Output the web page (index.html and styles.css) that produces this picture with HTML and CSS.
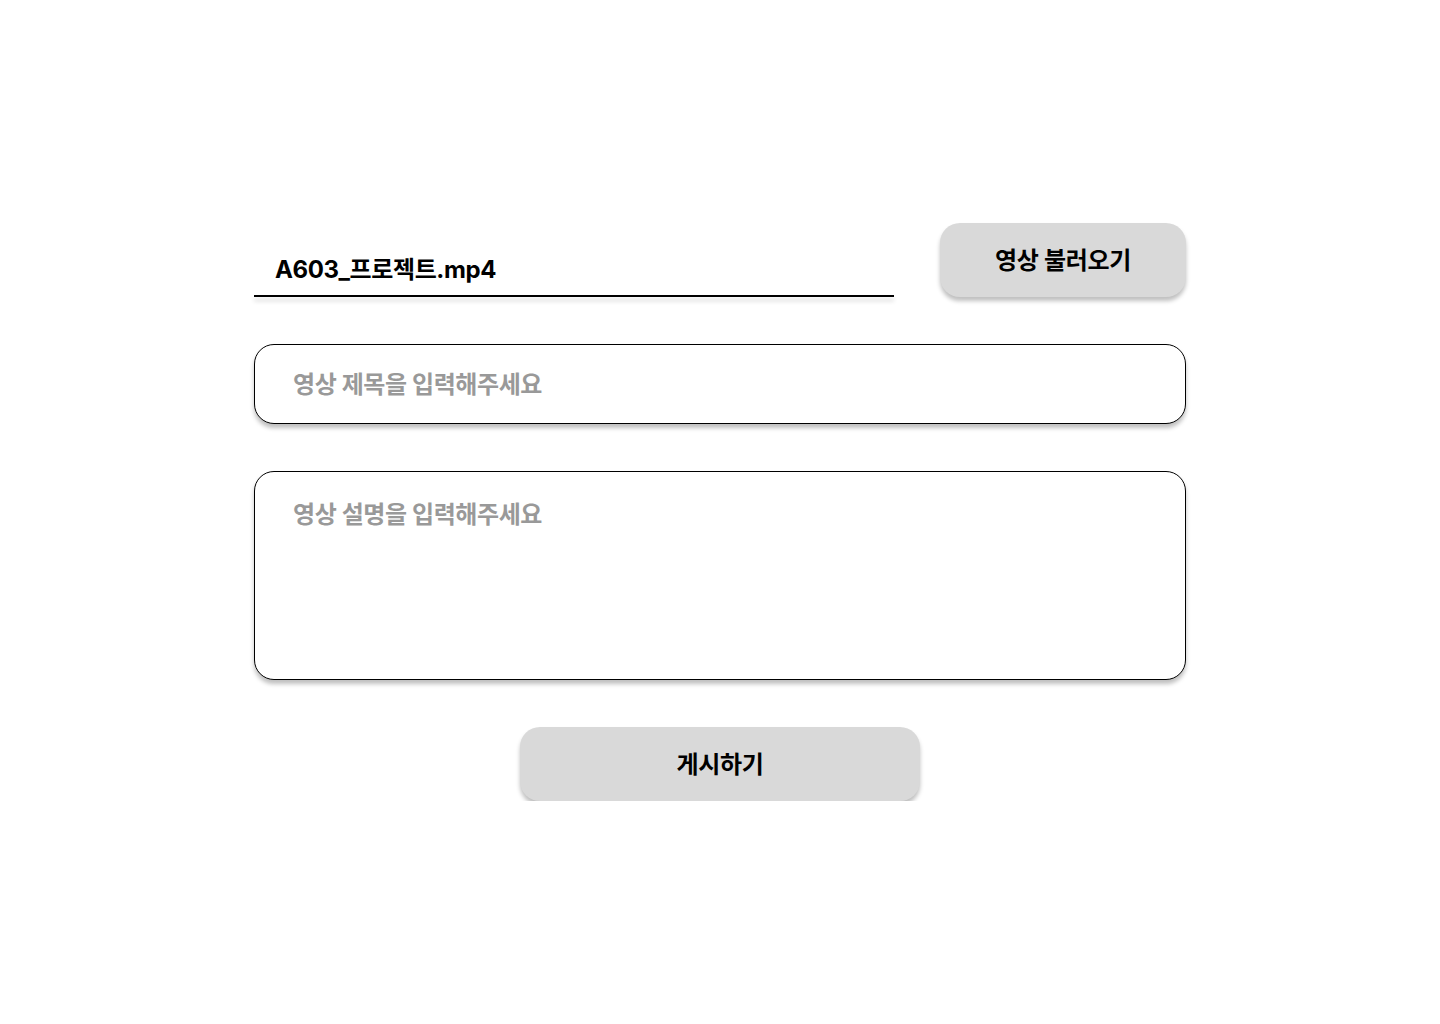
FILE: index.html
```html
<!DOCTYPE html>
<html lang="ko">
<head>
<meta charset="utf-8">
<title>영상 업로드</title>
<link rel="stylesheet" href="styles.css">
</head>
<body>
<main class="form">
  <div class="file-row">
    <div class="file-field">
      <span class="file-name">A603_프로젝트.mp4</span>
      <div class="file-line"></div>
    </div>
    <button class="btn btn-load" type="button"><span class="btn-label">영상 불러오기</span></button>
  </div>
  <div class="box box-title"><span class="placeholder">영상 제목을 입력해주세요</span></div>
  <div class="box box-desc"><span class="placeholder">영상 설명을 입력해주세요</span></div>
  <div class="submit-row">
    <button class="btn btn-post" type="button"><span class="btn-label">게시하기</span></button>
  </div>
</main>
</body>
</html>
```

FILE: styles.css
```css
* { box-sizing: border-box; }
html, body { margin: 0; padding: 0; background: #ffffff; }
body {
  font-family: Inter, "Noto Sans CJK KR", sans-serif;
  color: #000;
}
.form {
  width: 932px;
  margin: 223px auto 0;
  display: flex;
  flex-direction: column;
  gap: 47px;
}
.file-row {
  display: flex;
  align-items: flex-end;
  justify-content: space-between;
}
.file-field {
  width: 640px;
  display: flex;
  flex-direction: column;
}
.file-name {
  font-size: 24px;
  font-weight: 700;
  line-height: 30px;
  letter-spacing: -0.4px;
  padding-left: 21px;
  margin-bottom: 10px;
}
.file-line {
  height: 2px;
  background: #000;
  box-shadow: 0 4px 4px rgba(0,0,0,0.18);
}
.btn {
  border: none;
  background: #d9d9d9;
  border-radius: 20px;
  box-shadow: 0 4px 4px rgba(0,0,0,0.25);
  font-family: Inter, "Noto Sans CJK KR", sans-serif;
  font-size: 24px;
  font-weight: 700;
  color: #000;
  height: 74px;
  padding: 2px 0 0;
  display: flex;
  align-items: center;
  justify-content: center;
}
.btn-label { line-height: 30px; letter-spacing: -0.3px; }
.btn-load { width: 246px; }
.btn-post { width: 400px; }
.box {
  border: 1px solid #000;
  border-radius: 20px;
  box-shadow: 0 4px 4px rgba(0,0,0,0.25);
  background: #fff;
  padding: 0 38px;
}
.box-title {
  height: 80px;
  display: flex;
  align-items: center;
  padding-top: 2px;
}
.box-desc {
  height: 209px;
  padding-top: 28px;
}
.placeholder {
  font-size: 24px;
  font-weight: 700;
  line-height: 30px;
  color: #999999;
  letter-spacing: -0.4px;
}
.submit-row {
  display: flex;
  justify-content: center;
}
```
